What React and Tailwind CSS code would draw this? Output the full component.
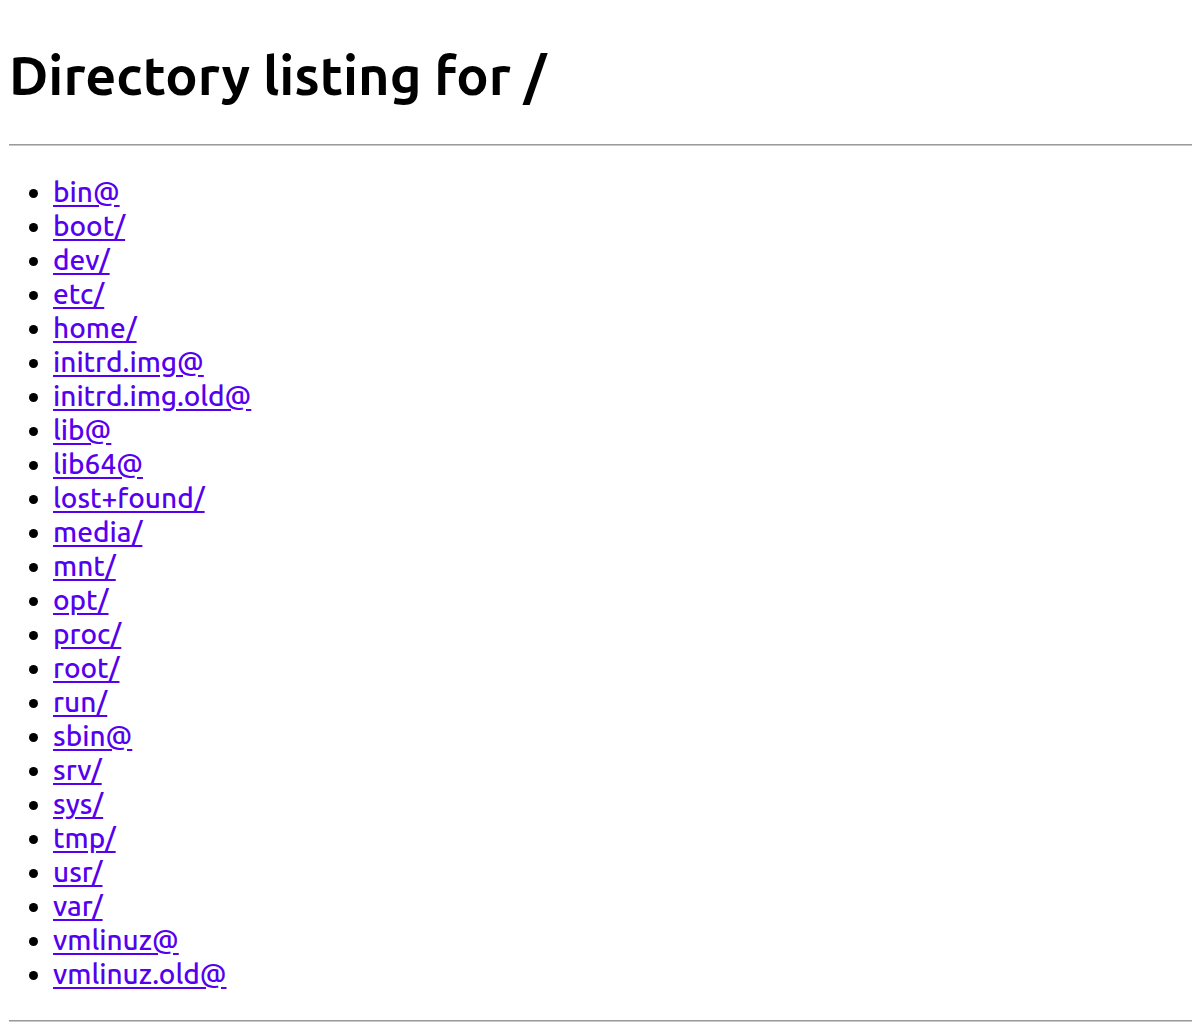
import React from 'react';

const ENTRIES = [
  'bin@', 'boot/', 'dev/', 'etc/', 'home/', 'initrd.img@', 'initrd.img.old@',
  'lib@', 'lib64@', 'lost+found/', 'media/', 'mnt/', 'opt/', 'proc/', 'root/',
  'run/', 'sbin@', 'srv/', 'sys/', 'tmp/', 'usr/', 'var/', 'vmlinuz@', 'vmlinuz.old@',
];

export default function App() {
  return (
    <div className="min-h-[1035px] bg-white pl-[9px] pt-[41px] text-black font-['Ubuntu','Noto_Sans',sans-serif]">
      <h1 className="text-[54px] font-bold leading-[68px]">Directory listing for /</h1>
      <hr className="mt-[35px] border-0 border-t border-b border-t-[#9a9a9a] border-b-[#c8c8c8]" />
      <ul className="list-disc pl-[44px] my-[29px] text-[28px] font-medium leading-[34px]">
        {ENTRIES.map((name) => (
          <li key={name}>
            <a href={'#' + name} className="text-[#5500ee] underline underline-offset-[3px]">
              {name}
            </a>
          </li>
        ))}
      </ul>
      <hr className="border-0 border-t border-b border-t-[#9a9a9a] border-b-[#c8c8c8]" />
    </div>
  );
}
